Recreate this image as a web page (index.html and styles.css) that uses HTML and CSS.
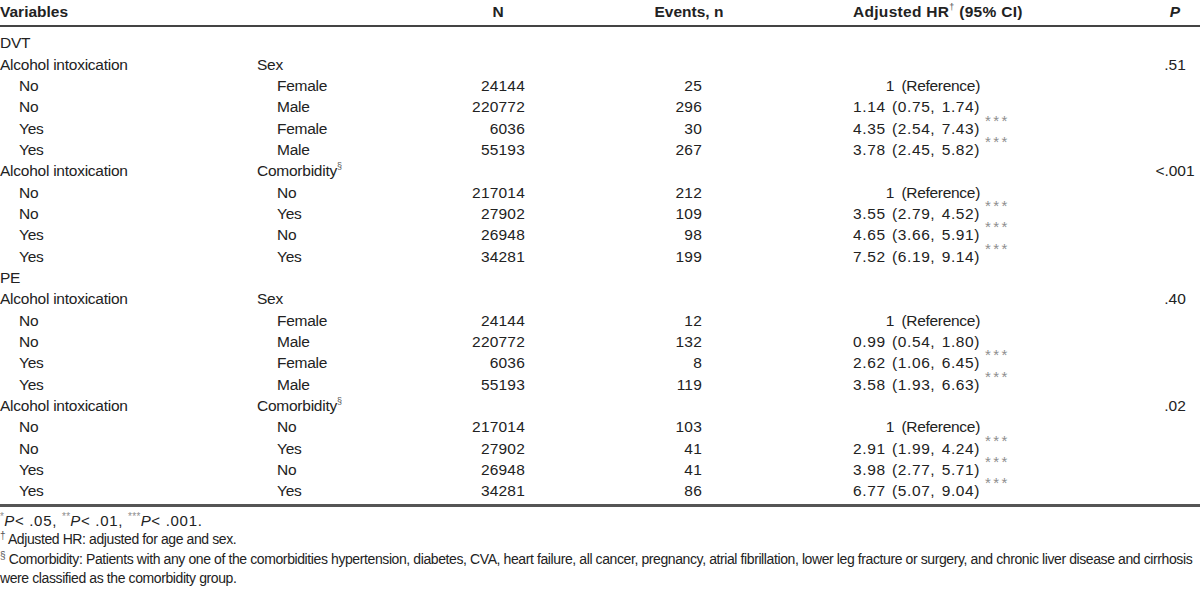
FILE: index.html
```html
<!DOCTYPE html>
<html lang="en">
<head>
<meta charset="utf-8">
<title>Table</title>
<link rel="stylesheet" href="styles.css">
</head>
<body>
<div class="table">
  <div class="row thead">
    <div class="c1">Variables</div>
    <div class="c2"></div>
    <div class="c3 hc">N</div>
    <div class="c4 hc">Events, n</div>
    <div class="c5 hh">Adjusted HR<sup class="mark">†</sup> (95% CI)</div>
    <div class="c6 hc"><i>P</i></div>
  </div>
  <div class="tbody">
    <div class="row"><div class="c1">DVT</div></div>
    <div class="row"><div class="c1">Alcohol intoxication</div><div class="c2">Sex</div><div class="c3"></div><div class="c4"></div><div class="c5"></div><div class="c6 pv">.51</div></div>
    <div class="row"><div class="c1 ind">No</div><div class="c2 ind">Female</div><div class="c3 num">24144</div><div class="c4 num">25</div><div class="c5 hr">1 <span class="ref">(Reference)</span><span class="sw"></span></div><div class="c6"></div></div>
    <div class="row"><div class="c1 ind">No</div><div class="c2 ind">Male</div><div class="c3 num">220772</div><div class="c4 num">296</div><div class="c5 hr">1.14 (0.75, 1.74)<span class="sw"></span></div><div class="c6"></div></div>
    <div class="row"><div class="c1 ind">Yes</div><div class="c2 ind">Female</div><div class="c3 num">6036</div><div class="c4 num">30</div><div class="c5 hr">4.35 (2.54, 7.43)<span class="sw"><sup class="sig">***</sup></span></div><div class="c6"></div></div>
    <div class="row"><div class="c1 ind">Yes</div><div class="c2 ind">Male</div><div class="c3 num">55193</div><div class="c4 num">267</div><div class="c5 hr">3.78 (2.45, 5.82)<span class="sw"><sup class="sig">***</sup></span></div><div class="c6"></div></div>
    <div class="row"><div class="c1">Alcohol intoxication</div><div class="c2">Comorbidity<sup class="mark">§</sup></div><div class="c3"></div><div class="c4"></div><div class="c5"></div><div class="c6 pv">&lt;.001</div></div>
    <div class="row"><div class="c1 ind">No</div><div class="c2 ind">No</div><div class="c3 num">217014</div><div class="c4 num">212</div><div class="c5 hr">1 <span class="ref">(Reference)</span><span class="sw"></span></div><div class="c6"></div></div>
    <div class="row"><div class="c1 ind">No</div><div class="c2 ind">Yes</div><div class="c3 num">27902</div><div class="c4 num">109</div><div class="c5 hr">3.55 (2.79, 4.52)<span class="sw"><sup class="sig">***</sup></span></div><div class="c6"></div></div>
    <div class="row"><div class="c1 ind">Yes</div><div class="c2 ind">No</div><div class="c3 num">26948</div><div class="c4 num">98</div><div class="c5 hr">4.65 (3.66, 5.91)<span class="sw"><sup class="sig">***</sup></span></div><div class="c6"></div></div>
    <div class="row"><div class="c1 ind">Yes</div><div class="c2 ind">Yes</div><div class="c3 num">34281</div><div class="c4 num">199</div><div class="c5 hr">7.52 (6.19, 9.14)<span class="sw"><sup class="sig">***</sup></span></div><div class="c6"></div></div>
    <div class="row"><div class="c1">PE</div></div>
    <div class="row"><div class="c1">Alcohol intoxication</div><div class="c2">Sex</div><div class="c3"></div><div class="c4"></div><div class="c5"></div><div class="c6 pv">.40</div></div>
    <div class="row"><div class="c1 ind">No</div><div class="c2 ind">Female</div><div class="c3 num">24144</div><div class="c4 num">12</div><div class="c5 hr">1 <span class="ref">(Reference)</span><span class="sw"></span></div><div class="c6"></div></div>
    <div class="row"><div class="c1 ind">No</div><div class="c2 ind">Male</div><div class="c3 num">220772</div><div class="c4 num">132</div><div class="c5 hr">0.99 (0.54, 1.80)<span class="sw"></span></div><div class="c6"></div></div>
    <div class="row"><div class="c1 ind">Yes</div><div class="c2 ind">Female</div><div class="c3 num">6036</div><div class="c4 num">8</div><div class="c5 hr">2.62 (1.06, 6.45)<span class="sw"><sup class="sig">***</sup></span></div><div class="c6"></div></div>
    <div class="row"><div class="c1 ind">Yes</div><div class="c2 ind">Male</div><div class="c3 num">55193</div><div class="c4 num">119</div><div class="c5 hr">3.58 (1.93, 6.63)<span class="sw"><sup class="sig">***</sup></span></div><div class="c6"></div></div>
    <div class="row"><div class="c1">Alcohol intoxication</div><div class="c2">Comorbidity<sup class="mark">§</sup></div><div class="c3"></div><div class="c4"></div><div class="c5"></div><div class="c6 pv">.02</div></div>
    <div class="row"><div class="c1 ind">No</div><div class="c2 ind">No</div><div class="c3 num">217014</div><div class="c4 num">103</div><div class="c5 hr">1 <span class="ref">(Reference)</span><span class="sw"></span></div><div class="c6"></div></div>
    <div class="row"><div class="c1 ind">No</div><div class="c2 ind">Yes</div><div class="c3 num">27902</div><div class="c4 num">41</div><div class="c5 hr">2.91 (1.99, 4.24)<span class="sw"><sup class="sig">***</sup></span></div><div class="c6"></div></div>
    <div class="row"><div class="c1 ind">Yes</div><div class="c2 ind">No</div><div class="c3 num">26948</div><div class="c4 num">41</div><div class="c5 hr">3.98 (2.77, 5.71)<span class="sw"><sup class="sig">***</sup></span></div><div class="c6"></div></div>
    <div class="row"><div class="c1 ind">Yes</div><div class="c2 ind">Yes</div><div class="c3 num">34281</div><div class="c4 num">86</div><div class="c5 hr">6.77 (5.07, 9.04)<span class="sw"><sup class="sig">***</sup></span></div><div class="c6"></div></div>
  </div>
  <div class="notes">
    <p class="n1"><sup class="fsig">*</sup><i>P</i>&lt; .05, <sup class="fsig">**</sup><i>P</i>&lt; .01, <sup class="fsig">***</sup><i>P</i>&lt; .001.</p>
    <p><sup class="fn">†</sup> Adjusted HR: adjusted for age and sex.</p>
    <p><sup class="fn">§</sup> <span>Comorbidity: Patients with any one of the comorbidities hypertension, diabetes, CVA, heart failure, all cancer, pregnancy, atrial fibrillation, lower leg fracture or surgery, and chronic liver disease and cirrhosis</span> <span>were classified as the comorbidity group.</span></p>
  </div>
</div>
</body>
</html>
```

FILE: styles.css
```css
html, body {
  margin: 0;
  padding: 0;
  background: #ffffff;
}

body {
  color: #222222;
  font-family: "Liberation Sans", Arial, sans-serif;
  font-size: 15.5px;
  letter-spacing: -0.25px;
}

.table {
  width: 1200px;
}

.row {
  display: grid;
  grid-template-columns: 257px 183px 116px 266px 328px 50px;
  height: 21.33px;
  line-height: 21.33px;
  white-space: nowrap;
}

.thead {
  font-weight: bold;
  letter-spacing: 0;
  padding-top: 1px;
  padding-bottom: 3px;
  border-bottom: 2px solid #444;
}

.tbody {
  padding-top: 5px;
  padding-bottom: 2px;
  border-bottom: 3px solid #555;
}

.hc {
  text-align: center;
}

.hh {
  padding-left: 31px;
  letter-spacing: 0.3px;
}

.ind {
  padding-left: 19px;
}

.c2.ind {
  padding-left: 20px;
}

.num {
  text-align: right;
  letter-spacing: 0.2px;
}

.c3.num {
  padding-right: 31px;
}

.c4.num {
  padding-right: 120px;
}

.hr {
  text-align: right;
  padding-right: 170px;
  letter-spacing: 0.6px;
  word-spacing: 1.5px;
}

.hr .ref {
  letter-spacing: -0.3px;
}

.sw {
  display: inline-block;
  width: 0;
  letter-spacing: 0;
  word-spacing: 0;
}

.pv {
  text-align: center;
  letter-spacing: 0;
}

.mark {
  font-size: 9px;
  font-weight: normal;
  vertical-align: 7px;
  line-height: 0;
  color: #555;
}

.sig {
  font-size: 15px;
  vertical-align: 8px;
  line-height: 0;
  color: #8e8e8e;
  letter-spacing: 2.4px;
  padding-left: 5px;
}

.notes {
  padding-top: 4px;
  width: 1197px;
  font-size: 14px;
  letter-spacing: -0.4px;
  line-height: 19.5px;
}

.notes p {
  margin: 0;
}

.notes .n1 {
  font-size: 15px;
  letter-spacing: 0.7px;
}

.fsig {
  font-size: 10px;
  vertical-align: 6px;
  line-height: 0;
  color: #8e8e8e;
  letter-spacing: 0.3px;
}

.fn {
  font-size: 10px;
  vertical-align: 5px;
  line-height: 0;
  color: #555;
}
```
